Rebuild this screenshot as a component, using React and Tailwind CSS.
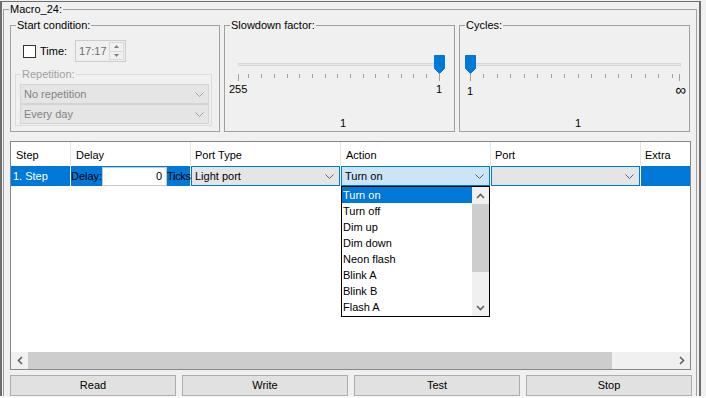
import React from 'react';

// Windows-Forms style macro editor panel

const GroupBox = ({ label, className = '', legendClass = 'text-black', children }) => (
  <fieldset className={`border border-[#a0a0a0] ${className}`}>
    <legend className={`ml-[5px] px-[1px] leading-[13px] ${legendClass}`}>{label}</legend>
    {children}
  </fieldset>
);

const Chevron = ({ color = '#606060', up = false }) => (
  <svg width="9" height="5" viewBox="0 0 9 5" className="block">
    <path d={up ? 'M0.5 4.5 L4.5 0.5 L8.5 4.5' : 'M0.5 0.5 L4.5 4.5 L8.5 0.5'} fill="none" stroke={color} />
  </svg>
);

const ScrollArrow = ({ dir }) => {
  const d = {
    up: 'M1 5 L4.5 1.5 L8 5',
    down: 'M1 1 L4.5 4.5 L8 1',
    left: 'M5 1 L1.5 4.5 L5 8',
    right: 'M1 1 L4.5 4.5 L1 8',
  }[dir];
  const horiz = dir === 'left' || dir === 'right';
  return (
    <svg width={horiz ? 6 : 9} height={horiz ? 9 : 6} className="block">
      <path d={d} fill="none" stroke="#606060" strokeWidth="1.6" />
    </svg>
  );
};

const Slider = ({ thumbX, trackFrom, trackTo, ticks }) => {
  const first = ticks[0];
  const last = ticks[ticks.length - 1];
  return (
    <svg width="222" height="28" className="block">
      <rect x={trackFrom + 0.5} y="9.5" width={trackTo - trackFrom} height="2" fill="#e7eaea" stroke="#d6d6d6" />
      {ticks.map((x, i) => (
        <line
          key={i}
          x1={x + 0.5}
          x2={x + 0.5}
          y1="20"
          y2={x === first || x === last ? 27 : 24}
          stroke="#a0a0a0"
        />
      ))}
      <path d={`M${thumbX + 0.5} 1.5 h10 v13 l-5 5 l-5 -5 z`} fill="#0078d7" stroke="#0078d7" />
    </svg>
  );
};

const slowTicks = [8, 18, 31, 44, 57, 69, 82, 95, 107, 120, 133, 145, 158, 171, 183, 196, 209];
const cycleTicks = [...Array.from({ length: 16 }, (_, i) => Math.round(6 + i * 13.45)), 215];

const actions = ['Turn on', 'Turn off', 'Dim up', 'Dim down', 'Neon flash', 'Blink A', 'Blink B', 'Flash A'];

const RowCombo = ({ text, bg, width }) => (
  <div className={`${width} h-full ${bg} border border-[#0078d7] flex items-center justify-between pl-[3px] pr-[5px]`}>
    <span>{text}</span>
    <Chevron />
  </div>
);

const DisabledCombo = ({ text }) => (
  <div className="w-[189px] h-[20px] bg-[#e5e5e5] border border-[#d4d4d4] flex items-center justify-between pl-[3px] pr-[4px] text-[#838383]">
    <span>{text}</span>
    <Chevron color="#a0a0a0" />
  </div>
);

export default function App() {
  return (
    <div className="w-[706px] h-[398px] bg-[#f0f0f0] overflow-hidden pt-[1px] font-['Liberation_Sans',Arial,sans-serif] text-[11px] leading-[13px] text-black">
      <div className="w-[701px] h-[395px] border-t border-x-2 border-[#6e6e6e] overflow-hidden">
        <GroupBox label="Macro_24:" className="ml-[1px] mt-[1px] w-[694px] h-[420px]">
          <div className="flex gap-[4px] ml-[6px] mt-[3px]">
            {/* Start condition */}
            <GroupBox label="Start condition:" className="w-[210px] h-[113px]">
              <div className="flex items-center h-[22px] mt-[8px] ml-[12px]">
                <div className="w-[13px] h-[13px] mt-[1px] border border-[#333333] bg-white" />
                <span className="ml-[4px] w-[35px]">Time:</span>
                <div className="w-[51px] h-[22px] border border-[#cccccc] bg-[#f0f0f0] flex">
                  <span className="flex-1 pl-[3px] self-center text-[#6d6d6d]">17:17</span>
                  <div className="w-[15px] my-[1px] mr-[1px] flex flex-col border border-[#d9d9d9]">
                    <div className="flex-1 flex items-center justify-center border-b border-[#d9d9d9]">
                      <svg width="5" height="3" className="block"><path d="M0 3 L2.5 0 L5 3 z" fill="#808080" /></svg>
                    </div>
                    <div className="flex-1 flex items-center justify-center">
                      <svg width="5" height="3" className="block"><path d="M0 0 L2.5 3 L5 0 z" fill="#808080" /></svg>
                    </div>
                  </div>
                </div>
              </div>
              <GroupBox
                label="Repetition:"
                legendClass="text-[#a0a0a0]"
                className="ml-[4px] mt-[6px] w-[197px] h-[58px] border-[#dcdcdc]"
              >
                <div className="ml-[4px] mt-[3px] flex flex-col">
                  <DisabledCombo text="No repetition" />
                  <DisabledCombo text="Every day" />
                </div>
              </GroupBox>
            </GroupBox>

            {/* Slowdown factor */}
            <GroupBox label="Slowdown factor:" className="w-[231px] h-[113px]">
              <div className="ml-[5px] mt-[22px]">
                <Slider thumbX={204} trackFrom={8} trackTo={210} ticks={slowTicks} />
              </div>
              <div className="ml-[4px] mt-[1px] w-[213px] h-[13px] flex justify-between items-baseline">
                <span>255</span>
                <span>1</span>
              </div>
              <div className="ml-[115px] mt-[21px]">1</div>
            </GroupBox>

            {/* Cycles */}
            <GroupBox label="Cycles:" className="w-[231px] h-[113px]">
              <div className="ml-[4px] mt-[22px]">
                <Slider thumbX={1} trackFrom={6} trackTo={216} ticks={cycleTicks} />
              </div>
              <div className="ml-[7px] mt-[1px] w-[219px] h-[13px] flex justify-between items-baseline">
                <span>1</span>
                <span className="text-[15px] leading-[13px]">∞</span>
              </div>
              <div className="ml-[115px] mt-[21px]">1</div>
            </GroupBox>
          </div>

          {/* Steps table */}
          <div className="relative ml-[6px] mt-[9px] w-[681px] h-[229px] border border-[#828790] bg-white flex flex-col">
            <div className="flex h-[24px] items-center shrink-0">
              <div className="w-[60px] h-full border-r border-[#e5e5e5] pl-[5px] pt-[2px] flex items-center">Step</div>
              <div className="w-[120px] h-full border-r border-[#e5e5e5] pl-[5px] pt-[2px] flex items-center">Delay</div>
              <div className="w-[150px] h-full border-r border-[#e5e5e5] pl-[4px] pt-[2px] flex items-center">Port Type</div>
              <div className="w-[150px] h-full border-r border-[#e5e5e5] pl-[5px] pt-[2px] flex items-center">Action</div>
              <div className="w-[150px] h-full border-r border-[#e5e5e5] pl-[4px] pt-[2px] flex items-center">Port</div>
              <div className="flex-1 h-full pl-[4px] pt-[2px] flex items-center">Extra</div>
            </div>
            <div className="flex h-[20px] gap-[1px] shrink-0">
              <div className="w-[59px] h-full bg-[#0078d7] text-white pl-[2px] flex items-center">1. Step</div>
              <div className="w-[119px] h-full bg-[#0078d7] flex items-center">
                <span className="w-[31px]">Delay:</span>
                <div className="w-[65px] h-[19px] mt-[1px] bg-white border border-[#c8c8c8] flex items-center justify-end pr-[4px]">0</div>
                <span className="w-[23px] tracking-[-0.3px]">Ticks</span>
              </div>
              <RowCombo text="Light port" bg="bg-[#e5e5e5]" width="w-[149px]" />
              <RowCombo text="Turn on" bg="bg-[#cce4f7]" width="w-[149px]" />
              <RowCombo text="" bg="bg-[#e5e5e5]" width="w-[149px]" />
              <div className="flex-1 h-full bg-[#0078d7]" />
            </div>
            <div className="flex-1" />
            <div className="h-[17px] bg-[#f0f0f0] flex shrink-0">
              <div className="w-[17px] h-full flex items-center justify-center">
                <ScrollArrow dir="left" />
              </div>
              <div className="w-[584px] h-full bg-[#cdcdcd]" />
              <div className="flex-1" />
              <div className="w-[17px] h-full flex items-center justify-center">
                <ScrollArrow dir="right" />
              </div>
            </div>

            {/* open Action dropdown */}
            <div className="absolute left-[330px] top-[44px] w-[149px] h-[131px] border border-black bg-white flex">
              <div className="w-[130px] flex flex-col">
                {actions.map((a, i) => (
                  <div
                    key={a}
                    className={`h-[16px] pl-[1px] flex items-center ${i === 0 ? 'bg-[#0078d7] text-white' : ''}`}
                  >
                    {a}
                  </div>
                ))}
              </div>
              <div className="w-[17px] bg-[#f0f0f0] flex flex-col">
                <div className="h-[17px] flex items-center justify-center">
                  <ScrollArrow dir="up" />
                </div>
                <div className="h-[68px] bg-[#cdcdcd]" />
                <div className="flex-1" />
                <div className="h-[17px] flex items-center justify-center">
                  <ScrollArrow dir="down" />
                </div>
              </div>
            </div>
          </div>

          {/* Buttons */}
          <div className="flex gap-[6px] ml-[6px] mt-[5px]">
            {['Read', 'Write', 'Test', 'Stop'].map((b) => (
              <button
                key={b}
                className="w-[166px] h-[21px] bg-[#e1e1e1] border border-[#adadad] text-center leading-[13px]"
              >
                {b}
              </button>
            ))}
          </div>
        </GroupBox>
      </div>
      <div className="h-[2px] bg-[#f9f9f9]" />
    </div>
  );
}
